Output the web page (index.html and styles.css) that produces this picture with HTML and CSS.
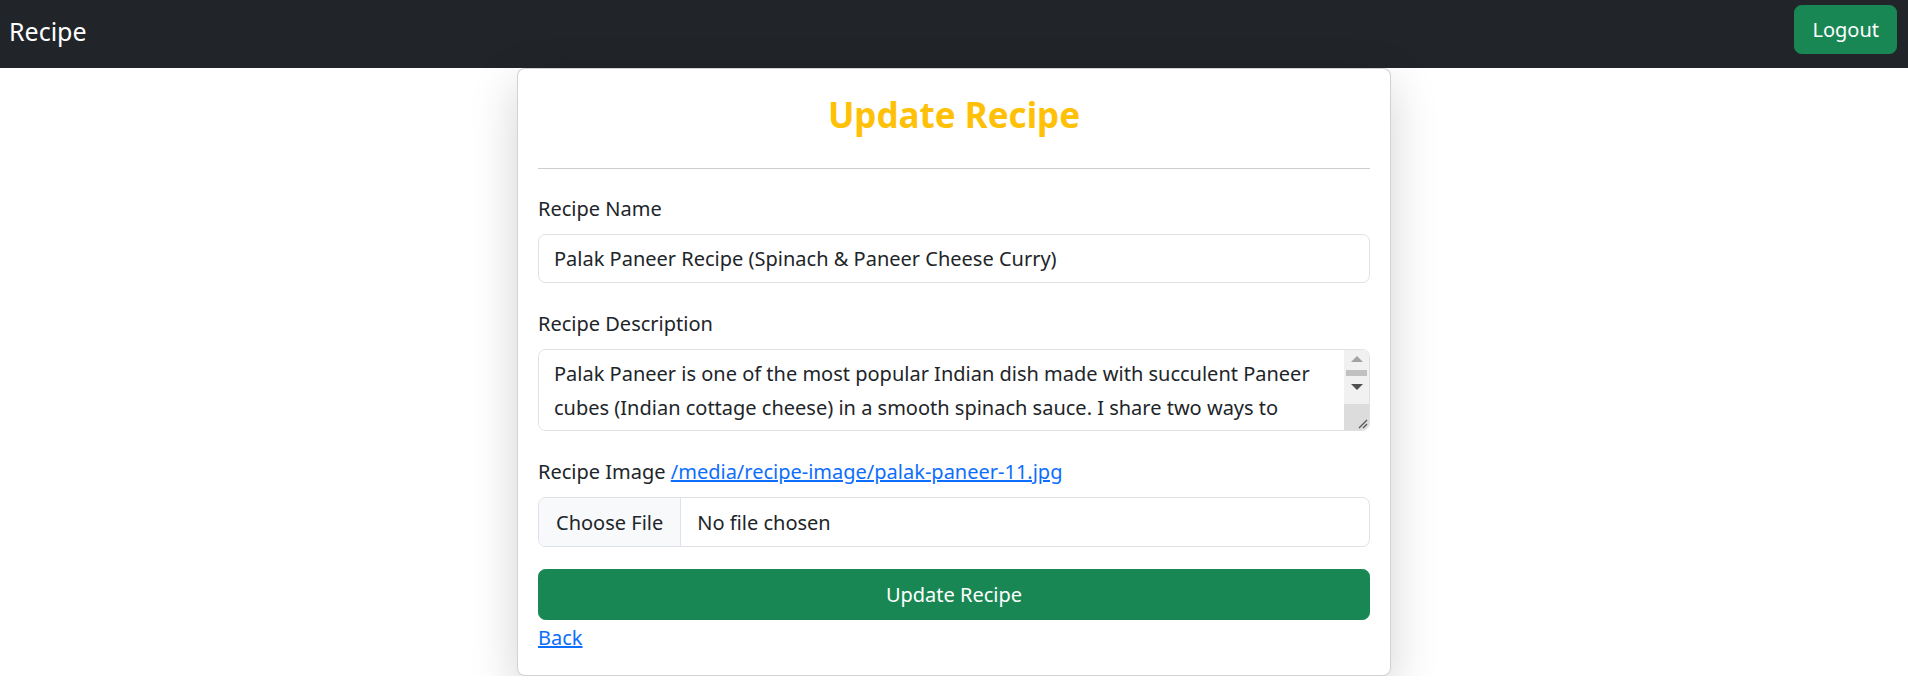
FILE: index.html
```html
<!DOCTYPE html>
<html lang="en">
<head>
<meta charset="utf-8">
<title>Update Recipe</title>
<link rel="stylesheet" href="styles.css">
</head>
<body>
<nav class="navbar">
  <a class="brand" href="#">Recipe</a>
  <a class="btn-success logout" href="#">Logout</a>
</nav>
<main class="page">
  <section class="card">
    <h3 class="card-title">Update Recipe</h3>
    <hr class="divider">
    <form class="recipe-form">
      <div class="field">
        <label class="form-label" for="name">Recipe Name</label>
        <input class="form-control" id="name" type="text" value="Palak Paneer Recipe (Spinach &amp; Paneer Cheese Curry)">
      </div>
      <div class="field">
        <label class="form-label" for="desc">Recipe Description</label>
        <div class="textarea-box">
          <textarea class="textarea" id="desc" rows="2">Palak Paneer is one of the most popular Indian dish made with succulent Paneer cubes (Indian cottage cheese) in a smooth spinach sauce. I share two ways to make it – a quick everyday version and a restaurant style version.</textarea>
          <div class="scrollbar">
            <span class="sb-btn"><span class="tri up"></span></span>
            <span class="sb-thumb"></span>
            <span class="sb-btn"><span class="tri down"></span></span>
            <span class="sb-track"></span>
            <span class="sb-corner">
              <svg width="12" height="12" viewBox="0 0 12 12"><path d="M11 3 L3 11 M11 7 L7 11" stroke="#555" stroke-width="1.2" fill="none"/></svg>
            </span>
          </div>
        </div>
      </div>
      <div class="field field-last">
        <label class="form-label" for="img">Recipe Image <a class="link" href="#">/media/recipe-image/palak-paneer-11.jpg</a></label>
        <input class="form-control file" id="img" type="file">
      </div>
      <button class="btn-success submit" type="button">Update Recipe</button>
      <a class="link back" href="#">Back</a>
    </form>
  </section>
</main>
</body>
</html>
```

FILE: styles.css
```css
* { box-sizing: border-box; }
html, body { margin: 0; padding: 0; }
body {
  font-family: "Noto Sans", "Open Sans", sans-serif;
  font-size: 20px;
  color: #212529;
  background: #fff;
}

.navbar {
  display: flex;
  justify-content: space-between;
  align-items: flex-start;
  height: 68px;
  padding: 0 11px 0 9px;
  background: #212529;
}
.brand {
  font-size: 25px;
  line-height: 62px;
  color: #fff;
  text-decoration: none;
}
.btn-success {
  background: #198754;
  color: #fff;
  border: 1px solid #198754;
  border-radius: 7.5px;
  font-family: inherit;
  font-size: 20px;
  text-decoration: none;
}
.logout {
  margin-top: 5px;
  height: 49px;
  padding: 0 17px;
  line-height: 47px;
}

.page { padding: 0; }
.card {
  width: 874px;
  margin: 0 auto;
  background: #fff;
  border: 1px solid rgba(0,0,0,.175);
  border-radius: 8px;
  padding: 20px 20px 22px;
  box-shadow: 0 1rem 3rem rgba(0,0,0,.175);
}
.card-title {
  margin: 5px 0 0;
  font-size: 35px;
  line-height: 42px;
  font-weight: 700;
  color: #ffc107;
  text-align: center;
}
.divider {
  margin: 32px 0 25px;
  border: 0;
  border-top: 1px solid #cdcecf;
  height: 0;
}
.field { margin-bottom: 26px; }
.field-last { margin-bottom: 22px; }
.form-label {
  display: block;
  line-height: 30px;
  margin-bottom: 10px;
}
.form-control {
  display: block;
  width: 100%;
  height: 49px;
  padding: 0 15px;
  font-family: inherit;
  font-size: 20px;
  color: #212529;
  background: #fff;
  border: 1px solid #dee2e6;
  border-radius: 7.5px;
  outline: none;
}
.file {
  height: 50px;
  padding: 0 15px 0 0;
  line-height: 48px;
  overflow: hidden;
}
.file::file-selector-button {
  height: 48px;
  margin: 0 16px 0 0;
  padding: 0 17px;
  font-family: inherit;
  font-size: 20px;
  color: #212529;
  background: #f8f9fa;
  border: 0;
  border-right: 1px solid #dee2e6;
  border-radius: 0;
}

.textarea-box {
  display: flex;
  height: 82px;
  border: 1px solid #dee2e6;
  border-radius: 7.5px;
  overflow: hidden;
}
.textarea {
  flex: 1;
  min-width: 0;
  border: 0;
  padding: 7px 15px;
  font-family: inherit;
  font-size: 20px;
  line-height: 34px;
  color: #212529;
  resize: none;
  overflow: hidden;
  outline: none;
}
.scrollbar {
  width: 25px;
  display: flex;
  flex-direction: column;
  background: #f1f1f1;
}
.sb-btn {
  height: 18px;
  display: flex;
  align-items: center;
  justify-content: center;
}
.tri { width: 0; height: 0; border-left: 6px solid transparent; border-right: 6px solid transparent; }
.tri.up { border-bottom: 6px solid #a3a3a3; }
.tri.down { border-top: 6px solid #505050; }
.sb-thumb { height: 6px; margin: 2px 2px; background: #c1c1c1; }
.sb-track { flex: 1; }
.sb-corner {
  height: 26px;
  background: #dcdcdc;
  display: flex;
  align-items: flex-end;
  justify-content: flex-end;
  padding: 0 1px 1px 0;
}
.sb-corner svg { display: block; }

.submit {
  display: block;
  width: 100%;
  height: 51px;
  padding: 0;
  cursor: pointer;
}
.link { color: #0d6efd; text-decoration: underline; }
.back {
  display: inline-block;
  margin-top: 3px;
  line-height: 30px;
}
```
